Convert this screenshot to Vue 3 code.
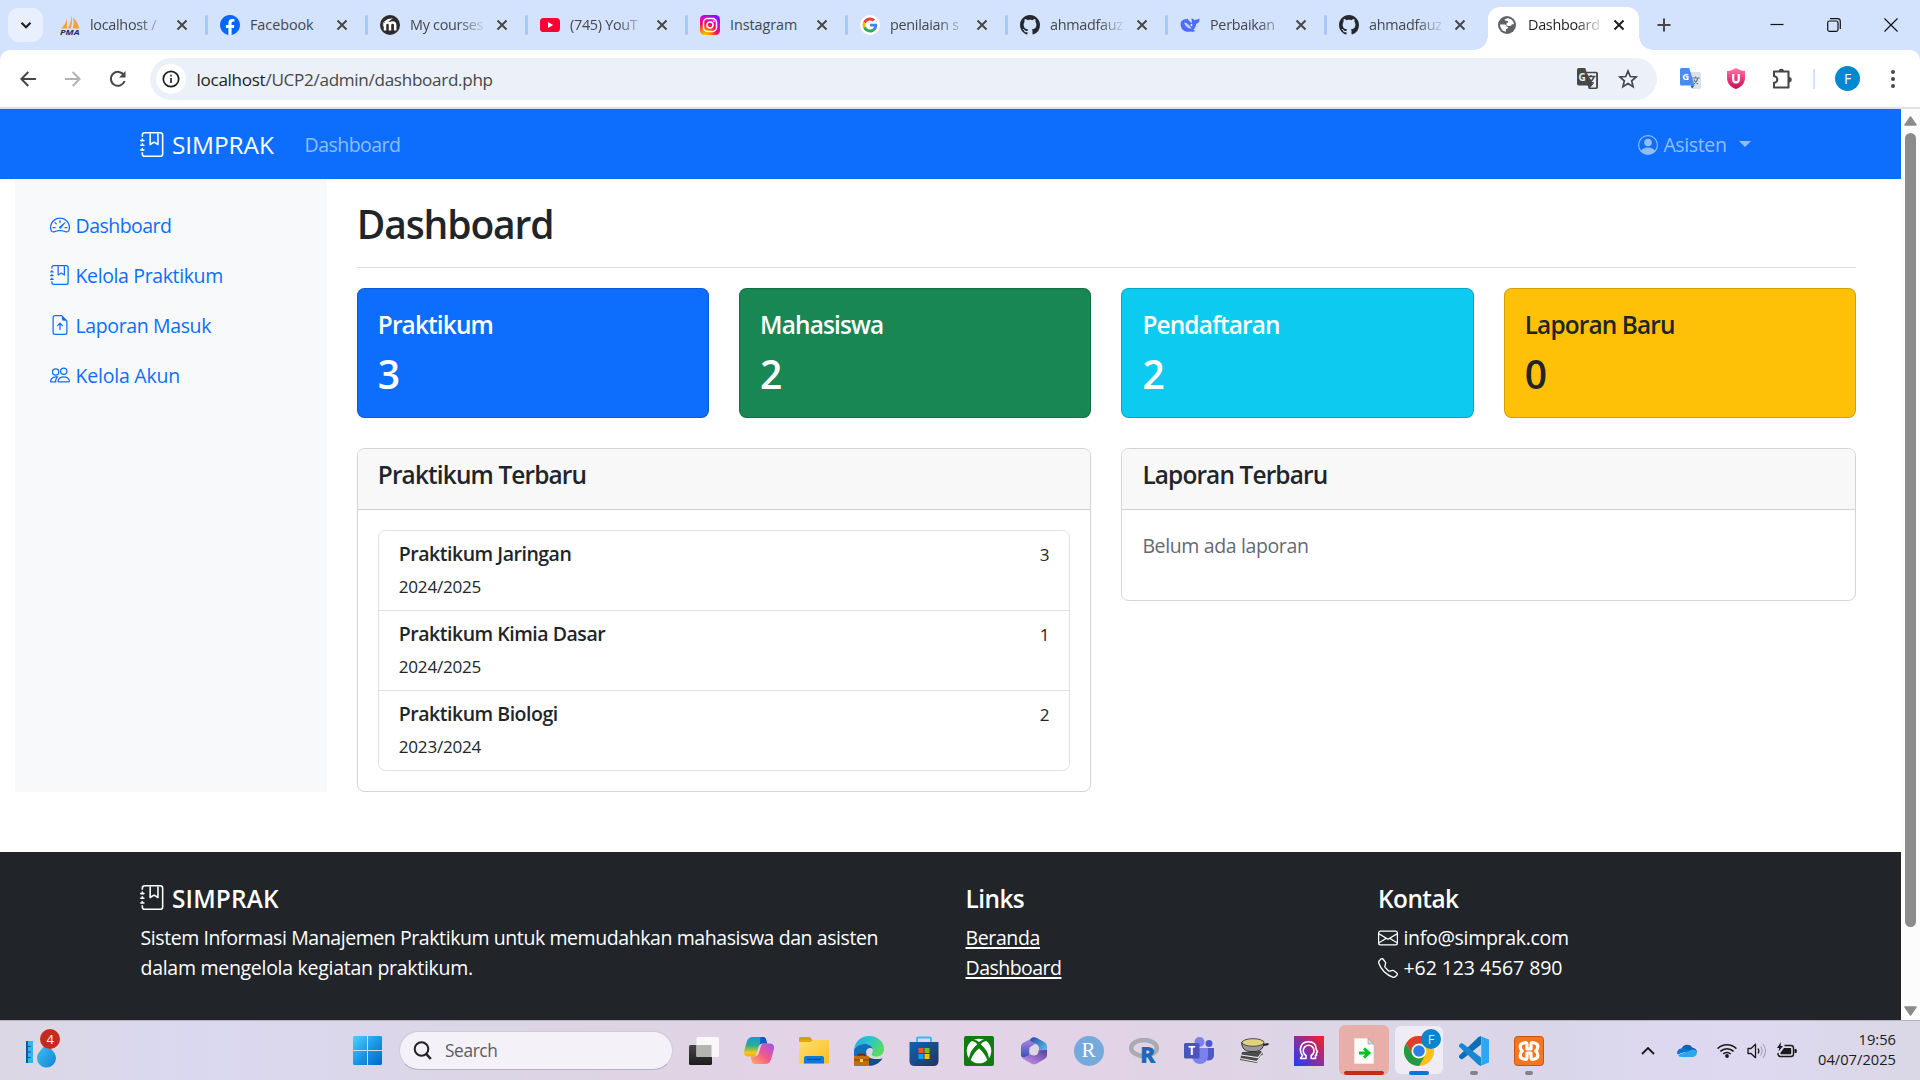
<script setup>
const bi = {
  journal: [
    'M6 8V1h1v6.117L8.743 6.07a.5.5 0 0 1 .514 0L11 7.117V1h1v7a.5.5 0 0 1-.757.429L9 7.083 6.757 8.43A.5.5 0 0 1 6 8z',
    'M3 0h10a2 2 0 0 1 2 2v12a2 2 0 0 1-2 2H3a2 2 0 0 1-2-2v-1h1v1a1 1 0 0 0 1 1h10a1 1 0 0 0 1-1V2a1 1 0 0 0-1-1H3a1 1 0 0 0-1 1v1H1V2a2 2 0 0 1 2-2z',
    'M1 5v-.5a.5.5 0 0 1 1 0V5h.5a.5.5 0 0 1 0 1h-2a.5.5 0 0 1 0-1H1zm0 3v-.5a.5.5 0 0 1 1 0V8h.5a.5.5 0 0 1 0 1h-2a.5.5 0 0 1 0-1H1zm0 3v-.5a.5.5 0 0 1 1 0v.5h.5a.5.5 0 0 1 0 1h-2a.5.5 0 0 1 0-1H1z'
  ],
  speedometer: [
    'M8 4a.5.5 0 0 1 .5.5V6a.5.5 0 0 1-1 0V4.5A.5.5 0 0 1 8 4zM3.732 5.732a.5.5 0 0 1 .707 0l.915.914a.5.5 0 1 1-.708.708l-.914-.915a.5.5 0 0 1 0-.707zM2 10a.5.5 0 0 1 .5-.5h1.586a.5.5 0 0 1 0 1H2.5A.5.5 0 0 1 2 10zm9.5 0a.5.5 0 0 1 .5-.5h1.5a.5.5 0 0 1 0 1H12a.5.5 0 0 1-.5-.5zm.754-4.246a.389.389 0 0 0-.527-.02L7.547 9.31a.91.91 0 1 0 1.302 1.258l3.434-4.297a.389.389 0 0 0-.029-.518z',
    'M0 10a8 8 0 1 1 15.547 2.661c-.442 1.253-1.845 1.602-2.932 1.25C11.309 13.488 9.475 13 8 13c-1.474 0-3.31.488-4.615.911-1.087.352-2.49.003-2.932-1.25A7.988 7.988 0 0 1 0 10zm8-7a7 7 0 0 0-6.603 9.329c.203.575.923.876 1.68.63C4.397 12.533 6.358 12 8 12s3.604.532 4.923.96c.757.245 1.477-.056 1.68-.631A7 7 0 0 0 8 3z'
  ],
  fileUp: [
    'M8.5 11.5a.5.5 0 0 1-1 0V7.707L6.354 8.854a.5.5 0 1 1-.708-.708l2-2a.5.5 0 0 1 .708 0l2 2a.5.5 0 0 1-.708.708L8.5 7.707V11.5z',
    'M14 14V4.5L9.5 0H4a2 2 0 0 0-2 2v12a2 2 0 0 0 2 2h8a2 2 0 0 0 2-2zM9.5 3A1.5 1.5 0 0 0 11 4.5h2V14a1 1 0 0 1-1 1H4a1 1 0 0 1-1-1V2a1 1 0 0 1 1-1h5.5v2z'
  ],
  people: [
    'M15 14s1 0 1-1-1-4-5-4-5 3-5 4 1 1 1 1h8Zm-7.978-1A.261.261 0 0 1 7 12.996c.001-.264.167-1.03.76-1.72C8.312 10.629 9.282 10 11 10c1.717 0 2.687.63 3.24 1.276.593.69.758 1.457.76 1.72l-.008.002A.274.274 0 0 1 15 13H7ZM11 7a2 2 0 1 0 0-4 2 2 0 0 0 0 4Zm3-2a3 3 0 1 1-6 0 3 3 0 0 1 6 0ZM6.936 9.28a5.88 5.88 0 0 0-1.23-.247A7.35 7.35 0 0 0 5 9c-4 0-5 3-5 4 0 .667.333 1 1 1h4.216A2.238 2.238 0 0 1 5 13c0-1.01.377-2.042 1.09-2.904.243-.294.526-.569.846-.816ZM4.92 10A5.493 5.493 0 0 0 4 13H1c0-.26.164-1.03.76-1.724.545-.636 1.492-1.256 3.16-1.275ZM1.5 5.5a3 3 0 1 1 6 0 3 3 0 0 1-6 0Zm3-2a2 2 0 1 0 0 4 2 2 0 0 0 0-4Z'
  ],
  person: [
    'M11 6a3 3 0 1 1-6 0 3 3 0 0 1 6 0z',
    'M0 8a8 8 0 1 1 16 0A8 8 0 0 1 0 8zm8-7a7 7 0 0 0-5.468 11.37C3.242 11.226 4.805 10 8 10s4.757 1.225 5.468 2.37A7 7 0 0 0 8 1z'
  ],
  envelope: [
    'M0 4a2 2 0 0 1 2-2h12a2 2 0 0 1 2 2v8a2 2 0 0 1-2 2H2a2 2 0 0 1-2-2V4Zm2-1a1 1 0 0 0-1 1v.217l7 4.2 7-4.2V4a1 1 0 0 0-1-1H2Zm13 2.383-4.708 2.825L15 11.105V5.383Zm-.034 6.876-5.64-3.471L8 9.583l-1.326-.795-5.64 3.47A1 1 0 0 0 2 13h12a1 1 0 0 0 .966-.741ZM1 11.105l4.708-2.897L1 5.383v5.722Z'
  ],
  telephone: [
    'M3.654 1.328a.678.678 0 0 0-1.015-.063L1.605 2.3c-.483.484-.661 1.169-.45 1.77a17.568 17.568 0 0 0 4.168 6.608 17.569 17.569 0 0 0 6.608 4.168c.601.211 1.286.033 1.77-.45l1.034-1.034a.678.678 0 0 0-.063-1.015l-2.307-1.794a.678.678 0 0 0-.58-.122l-2.19.547a1.745 1.745 0 0 1-1.657-.459L5.482 8.062a1.745 1.745 0 0 1-.46-1.657l.548-2.19a.678.678 0 0 0-.122-.58L3.654 1.328zM1.884.511a1.745 1.745 0 0 1 2.612.163L6.29 2.98c.329.423.445.974.315 1.494l-.547 2.19a.678.678 0 0 0 .178.643l2.457 2.457a.678.678 0 0 0 .644.178l2.189-.547a1.745 1.745 0 0 1 1.494.315l2.306 1.794c.829.645.905 1.87.163 2.611l-1.034 1.034c-.74.74-1.846 1.065-2.877.702a18.634 18.634 0 0 1-7.01-4.42 18.634 18.634 0 0 1-4.42-7.009c-.362-1.03-.037-2.137.703-2.877L1.885.511z'
  ]
}

const tabs = [
  { icon: 'pma', title: 'localhost /' },
  { icon: 'facebook', title: 'Facebook' },
  { icon: 'moodle', title: 'My courses' },
  { icon: 'youtube', title: '(745) YouT' },
  { icon: 'instagram', title: 'Instagram' },
  { icon: 'google', title: 'penilaian s' },
  { icon: 'github', title: 'ahmadfauz' },
  { icon: 'deepseek', title: 'Perbaikan', narrow: true },
  { icon: 'github', title: 'ahmadfauz', narrow: true },
  { icon: 'globe', title: 'Dashboard', active: true }
]

const menu = [
  { icon: 'speedometer', label: 'Dashboard', cls: 'tight' },
  { icon: 'journal', label: 'Kelola Praktikum' },
  { icon: 'fileUp', label: 'Laporan Masuk' },
  { icon: 'people', label: 'Kelola Akun', cls: 'loose' }
]

const stats = [
  { title: 'Praktikum', value: 3, tone: 'primary' },
  { title: 'Mahasiswa', value: 2, tone: 'success' },
  { title: 'Pendaftaran', value: 2, tone: 'info' },
  { title: 'Laporan Baru', value: 0, tone: 'warning' }
]

const courses = [
  { name: 'Praktikum Jaringan', year: '2024/2025', count: 3 },
  { name: 'Praktikum Kimia Dasar', year: '2024/2025', count: 1 },
  { name: 'Praktikum Biologi', year: '2023/2024', count: 2 }
]
</script>

<template>
  <div class="screen">
    <header class="browser">
      <div class="tabstrip">
        <button class="tab-search">
          <svg width="14" height="14" viewBox="0 0 14 14"><path d="M2.5 4.8 7 9.3l4.5-4.5" fill="none" stroke="#1f1f1f" stroke-width="2.2" /></svg>
        </button>
        <div v-for="(t, i) in tabs" :key="i" class="tab" :class="{ active: t.active, narrow: t.narrow }">
          <span class="fav">
            <svg v-if="t.icon === 'pma'" width="20" height="20" viewBox="0 0 20 20">
              <path d="M7 3.500V13.500H1C4 11 6 8 7 3.500zM11.500 0c.8 5 .6 9.500-.8 13.500H8C10 9.500 11.300 5 11.500 0zM13 2.500c3.500 3 5.500 7 6.200 11h-6.400C13.800 10 14 6 13 2.500z" fill="#f5a13d" />
              <text x="0" y="19.800" font-size="7.500" font-weight="700" font-style="italic" fill="#2b2c54" textLength="19.500" lengthAdjust="spacingAndGlyphs">PMA</text>
            </svg>
            <svg v-else-if="t.icon === 'facebook'" width="20" height="20" viewBox="0 0 16 16">
              <circle cx="8" cy="8" r="7.500" fill="#fff" />
              <path fill="#0866ff" d="M16 8.049c0-4.446-3.582-8.050-8-8.050C3.580 0 0 3.603 0 8.050c0 4.017 2.926 7.347 6.750 7.951v-5.625h-2.030V8.050H6.750V6.275c0-2.017 1.195-3.131 3.022-3.131.876 0 1.791.157 1.791.157v1.980h-1.009c-.993 0-1.303.621-1.303 1.258v1.510h2.218l-.354 2.326H9.250V16c3.824-.604 6.750-3.934 6.750-7.951z" />
            </svg>
            <svg v-else-if="t.icon === 'moodle'" width="20" height="20" viewBox="0 0 20 20">
              <circle cx="10" cy="10" r="10" fill="#2b2b2b" />
              <path d="M5 15.500V10q0-2.600 2.500-2.600T10 10v5.500M10 10q0-2.600 2.600-2.600T15.200 10v5.500" fill="none" stroke="#fff" stroke-width="2.500" />
              <path d="M2.800 7.500 8 4l5-.8-4.500 3.400z" fill="#fff" /><path d="M3.300 7.500v4" stroke="#fff" stroke-width=".8" />
            </svg>
            <svg v-else-if="t.icon === 'youtube'" width="20" height="20" viewBox="0 0 20 20">
              <rect y="3" width="20" height="14" rx="3.600" fill="#ff0033" /><path d="m8 7 5.200 3L8 13z" fill="#fff" />
            </svg>
            <svg v-else-if="t.icon === 'instagram'" width="20" height="20" viewBox="0 0 20 20">
              <defs>
                <radialGradient id="ig" cx=".25" cy="1.050" r="1.150">
                  <stop offset="0" stop-color="#ffd600" /><stop offset=".3" stop-color="#ff7a00" /><stop offset=".55" stop-color="#ff0069" /><stop offset=".78" stop-color="#e300c8" /><stop offset="1" stop-color="#7a14ff" />
                </radialGradient>
              </defs>
              <rect width="20" height="20" rx="4.500" fill="url(#ig)" />
              <rect x="3.500" y="3.500" width="13" height="13" rx="4" fill="none" stroke="#fff" stroke-width="1.500" />
              <circle cx="10" cy="10" r="3" fill="none" stroke="#fff" stroke-width="1.500" /><circle cx="13.800" cy="6.200" r=".9" fill="#fff" />
            </svg>
            <svg v-else-if="t.icon === 'google'" width="20" height="20" viewBox="0 0 20 20">
              <circle cx="10" cy="10" r="10" fill="#fff" />
              <g transform="translate(2.500 2.500) scale(.3125)">
                <path fill="#ea4335" d="M24 9.500c3.540 0 6.710 1.220 9.210 3.600l6.850-6.850C35.900 2.380 30.470 0 24 0 14.620 0 6.510 5.380 2.560 13.220l7.980 6.190C12.430 13.720 17.740 9.500 24 9.500z" />
                <path fill="#4285f4" d="M46.980 24.550c0-1.570-.15-3.090-.38-4.550H24v9.020h12.940c-.58 2.960-2.260 5.480-4.780 7.180l7.730 6c4.510-4.180 7.090-10.360 7.090-17.650z" />
                <path fill="#fbbc05" d="M10.530 28.590c-.48-1.450-.76-2.990-.76-4.590s.27-3.140.76-4.590l-7.980-6.190C.92 16.460 0 20.120 0 24c0 3.880.92 7.540 2.560 10.780l7.970-6.190z" />
                <path fill="#34a853" d="M24 48c6.480 0 11.930-2.130 15.890-5.810l-7.730-6c-2.150 1.450-4.920 2.300-8.160 2.300-6.260 0-11.570-4.220-13.470-9.910l-7.980 6.190C6.510 42.620 14.620 48 24 48z" />
              </g>
            </svg>
            <svg v-else-if="t.icon === 'github'" width="20" height="20" viewBox="0 0 16 16">
              <path fill="#24292f" d="M8 0C3.580 0 0 3.580 0 8c0 3.540 2.290 6.530 5.470 7.590.4.070.55-.17.55-.38 0-.19-.01-.82-.01-1.490-2.010.37-2.530-.49-2.690-.94-.09-.23-.48-.94-.82-1.130-.28-.15-.68-.52-.01-.53.63-.01 1.080.58 1.230.82.72 1.210 1.870.87 2.330.66.070-.52.28-.87.51-1.070-1.780-.2-3.640-.89-3.640-3.950 0-.87.31-1.590.82-2.150-.08-.2-.36-1.020.080-2.120 0 0 .67-.21 2.200.82.64-.18 1.320-.27 2-.27s1.360.090 2 .27c1.530-1.040 2.200-.82 2.200-.82.44 1.100.16 1.920.080 2.120.51.56.82 1.270.82 2.150 0 3.070-1.870 3.750-3.650 3.950.29.25.54.73.54 1.480 0 1.070-.01 1.930-.01 2.200 0 .21.15.46.55.38A8.010 8.010 0 0 0 16 8c0-4.420-3.580-8-8-8z" />
            </svg>
            <svg v-else-if="t.icon === 'deepseek'" width="20" height="20" viewBox="0 0 20 20">
              <path d="M.6 9.200C.6 5.800 3.500 4 6.500 4.300c1-.8 1.700-.6 1.700.3 0 .8 2 1.900 3.300 3.600.6-.8.4-2.600-.3-4.600C13 3.300 14 4.900 15 5.300c.8-.7 2.700-.4 4.600-1.700.2 3.500-1.200 5-3.300 5.200-.3 2.600-1.400 4.500-3 6l2.200 1.300c-1.600 1-3.300.9-4.600.3C5.600 18 .6 14.600.6 9.200z" fill="#4d6bfe" />
              <path d="M4.200 7.600c3.300.2 5.200 3 7.600 5.800-2.800.8-6.600-1.200-7.600-5.800z" fill="#d3e3fd" opacity=".85" /><circle cx="11.500" cy="10" r=".9" fill="#fff" />
            </svg>
            <svg v-else width="18" height="20" viewBox="0 0 18 18">
              <circle cx="9" cy="9" r="9" fill="#5f6368" />
              <path d="M2 8.500h4.500q2 0 2 2.200h1.800q0 2.300-2.300 2.300v2.800Q2.500 15 2 8.500zM10.200 2.300q5 1 5.800 6h-2.200q0 1.700-1.800 1.700h-2q-1.700 0-1.700-1.700t1.700-1.700V5q-3 0-3.500-1.200 1.500-1.600 3.700-1.500z" fill="#fff" />
            </svg>
          </span>
          <span class="tab-title">{{ t.title }}</span>
          <svg class="tab-x" width="12" height="12" viewBox="0 0 12 12"><path d="m1.500 1.500 9 9m0-9-9 9" :stroke="t.active ? '#1f1f1f' : '#474747'" stroke-width="2" /></svg>
        </div>
        <svg class="new-tab" width="14" height="14" viewBox="0 0 14 14"><path d="M7 .5v13M.5 7h13" stroke="#474747" stroke-width="2" /></svg>
        <div class="win-controls">
          <span><svg width="14" height="14" viewBox="0 0 14 14"><path d="M.5 6.500h13" stroke="#111" stroke-width="1.200" /></svg></span>
          <span><svg width="14" height="14" viewBox="0 0 14 14"><g fill="none" stroke="#111" stroke-width="1.200"><rect x=".7" y="3" width="10.300" height="10.300" rx="1.800" /><path d="M3 .7h7.500a2.800 2.800 0 0 1 2.800 2.800V11" /></g></svg></span>
          <span><svg width="14" height="14" viewBox="0 0 14 14"><path d="m.5.5 13 13m0-13-13 13" stroke="#111" stroke-width="1.200" /></svg></span>
        </div>
      </div>

      <div class="toolbar">
        <span class="tool"><svg width="16" height="16" viewBox="0 0 16 16"><path d="M16 8H1.600M8.300 1 1.400 8l6.900 7" fill="none" stroke="#474747" stroke-width="2" /></svg></span>
        <span class="tool"><svg width="16" height="16" viewBox="0 0 16 16"><path d="M0 8h14.400M7.700 1l6.900 7-6.900 7" fill="none" stroke="#b0b2b5" stroke-width="2" /></svg></span>
        <span class="tool"><svg width="18" height="18" viewBox="0 0 18 18"><path d="M15.600 11A7 7 0 1 1 15 5.300" fill="none" stroke="#474747" stroke-width="2" /><path d="M16.500 1v6.500H10z" fill="#474747" /></svg></span>
        <div class="omnibox">
          <span class="site-info"><svg width="18" height="18" viewBox="0 0 18 18"><circle cx="9" cy="9" r="7.700" fill="none" stroke="#1f1f1f" stroke-width="1.700" /><path d="M9 8v5M9 4.800v1.800" stroke="#1f1f1f" stroke-width="1.600" /></svg></span>
          <span class="url"><b>localhost</b>/UCP2/admin/dashboard.php</span>
          <svg class="omni-translate" width="21" height="21" viewBox="0 0 21 21">
            <path d="M1.700 0h6.600l1.100 3.800h9.900A1.700 1.700 0 0 1 21 5.500v13.800a1.700 1.700 0 0 1-1.700 1.700h-7.500l-1.200-3.600H1.700A1.700 1.700 0 0 1 0 15.700v-14A1.700 1.700 0 0 1 1.700 0z" fill="#474747" />
            <path d="M10 5.200h9.100v14.200h-6l3-3z" fill="#ebf0f9" />
            <path d="M10 8.500h8.500M14 7v1.500M17 8.500c-.7 3-2.600 4.800-5 6.300M12 10.200c.8 2.300 2.600 4 4.800 5.200" fill="none" stroke="#474747" stroke-width="1.300" />
            <text x="1.600" y="12.600" font-size="10" font-weight="700" fill="#ebf0f9">G</text>
          </svg>
          <svg width="20" height="20" viewBox="0 0 20 20"><path d="m10 2 2.300 5.500 5.900.5-4.500 3.900 1.400 5.800-5.100-3.100-5.100 3.100 1.400-5.800L1.800 8l5.900-.5z" fill="none" stroke="#474747" stroke-width="1.700" /></svg>
        </div>
        <span class="tool first">
          <svg width="21" height="21" viewBox="0 0 21 21">
            <path d="M8 4h11.500A1.500 1.500 0 0 1 21 5.500v14a1.500 1.500 0 0 1-1.500 1.500H12z" fill="#dfe1e5" />
            <path d="M12 10h7.500M15.500 8.500V10M18 10c-.6 2.500-2.300 4.500-4.300 6M13.800 11.500c.8 2 2.500 3.500 4.300 4.500" fill="none" stroke="#607d8b" stroke-width="1.200" />
            <path d="m10.500 17.500 4 0-2.500 3z" fill="#1a53c5" />
            <path d="M1.500 0H9.300l5.200 17.500h-13A1.500 1.500 0 0 1 0 16V1.500A1.500 1.500 0 0 1 1.500 0z" fill="#4a8af4" />
            <text x="2.200" y="12" font-size="9.500" font-weight="700" fill="#fff">G</text>
          </svg>
        </span>
        <span class="tool">
          <svg width="18" height="21" viewBox="0 0 18 21">
            <defs><linearGradient id="sh" x1="0" y1="0" x2="0" y2="1"><stop offset="0" stop-color="#ff7aa8" /><stop offset=".5" stop-color="#ea3d7c" /><stop offset="1" stop-color="#c2095a" /></linearGradient></defs>
            <path d="M9 0c2.500 1.600 5.500 2.700 9 3v7c0 5-3.500 9-9 11-5.500-2-9-6-9-11V3c3.500-.3 6.500-1.400 9-3z" fill="url(#sh)" />
            <path d="M6.200 6v5.500a2.800 2.800 0 0 0 5.600 0V6" fill="none" stroke="#fff" stroke-width="2.200" />
          </svg>
        </span>
        <span class="tool puzzle"><svg width="21" height="21" viewBox="0 0 21 21"><path d="M2 3.500h14.500v16H2v-4.700a3.300 3.300 0 0 0 0-6.600z" fill="none" stroke="#474747" stroke-width="2.100" stroke-linejoin="round" /><path d="M6.600 3.500a2.700 2.700 0 0 1 5.400 0zM17 9a2.700 2.700 0 0 1 0 5.400z" fill="#474747" /></svg></span>
        <span class="tool-sep"></span>
        <span class="tool"><span class="avatar">F</span></span>
        <span class="tool"><svg width="4" height="18" viewBox="0 0 4 18"><g fill="#474747"><circle cx="2" cy="2" r="2" /><circle cx="2" cy="9" r="2" /><circle cx="2" cy="16" r="2" /></g></svg></span>
      </div>
    </header>

    <div class="viewport">
      <div class="page">
        <nav class="navbar">
          <div class="container">
            <a class="brand"><svg class="bi" viewBox="0 0 16 16"><path v-for="d in bi.journal" :key="d" :d="d" /></svg>SIMPRAK</a>
            <a class="nav-link tight">Dashboard</a>
            <a class="nav-link user"><svg class="bi" viewBox="0 0 16 16"><path v-for="d in bi.person" :key="d" fill-rule="evenodd" :d="d" /></svg>Asisten<i class="caret"></i></a>
          </div>
        </nav>

        <div class="layout">
          <aside class="sidebar">
            <a v-for="m in menu" :key="m.label" :class="m.cls"><svg class="bi" viewBox="0 0 16 16"><path v-for="d in bi[m.icon]" :key="d" :d="d" /></svg>{{ m.label }}</a>
          </aside>
          <main class="main">
            <h1>Dashboard</h1>
            <div class="grid four">
              <section v-for="s in stats" :key="s.title" class="card stat" :class="s.tone">
                <h5>{{ s.title }}</h5>
                <h2>{{ s.value }}</h2>
              </section>
            </div>
            <div class="grid two">
              <section class="card">
                <div class="card-header"><h5>Praktikum Terbaru</h5></div>
                <div class="card-body">
                  <ul class="list">
                    <li v-for="c in courses" :key="c.name">
                      <div><h6>{{ c.name }}</h6><small>{{ c.count }}</small></div>
                      <small class="year">{{ c.year }}</small>
                    </li>
                  </ul>
                </div>
              </section>
              <section class="card">
                <div class="card-header"><h5>Laporan Terbaru</h5></div>
                <div class="card-body"><p class="muted">Belum ada laporan</p></div>
              </section>
            </div>
          </main>
        </div>

        <footer class="footer">
          <div class="container">
            <div class="col wide">
              <h5 class="caps"><svg class="bi" viewBox="0 0 16 16"><path v-for="d in bi.journal" :key="d" :d="d" /></svg>SIMPRAK</h5>
              <p><span class="l1">Sistem Informasi Manajemen Praktikum untuk memudahkan mahasiswa dan asisten</span><br><span class="l2">dalam mengelola kegiatan praktikum.</span></p>
            </div>
            <div class="col">
              <h5>Links</h5>
              <a>Beranda</a>
              <a class="tight">Dashboard</a>
            </div>
            <div class="col">
              <h5>Kontak</h5>
              <span class="contact"><svg class="bi" viewBox="0 0 16 16"><path :d="bi.envelope[0]" /></svg>info@simprak.com</span>
              <span class="contact phone"><svg class="bi" viewBox="0 0 16 16"><path :d="bi.telephone[0]" /></svg>+62 123 4567 890</span>
            </div>
          </div>
        </footer>
      </div>
      <div class="scrollbar">
        <svg width="13" height="10" viewBox="0 0 13 10"><path d="M6.500 1 12 9H1z" fill="#8b8b8b" stroke="#8b8b8b" stroke-width="1.500" stroke-linejoin="round" /></svg>
        <div class="thumb"></div>
        <svg class="down" width="13" height="10" viewBox="0 0 13 10"><path d="M6.500 9 12 1H1z" fill="#8b8b8b" stroke="#8b8b8b" stroke-width="1.500" stroke-linejoin="round" /></svg>
      </div>
    </div>

    <div class="taskbar">
      <div class="widget">
        <svg width="34" height="40" viewBox="0 0 34 40">
          <defs><linearGradient id="wd" x1="0" y1="0" x2="1" y2="1"><stop offset="0" stop-color="#3cc4f2" /><stop offset="1" stop-color="#1484d6" /></linearGradient></defs>
          <rect x="0" y="12" width="7" height="22" fill="#35b4ee" /><rect x="0" y="12" width="2" height="22" fill="#12569c" />
          <path d="M2 17.500h3M2 23h3M2 28.500h3" stroke="#12569c" stroke-width="1.200" />
          <path d="M20.500 14c4 6 9.500 9.500 9.500 15a9.500 9.500 0 0 1-19 0c0-5.500 5.500-9 9.500-15z" fill="url(#wd)" />
        </svg>
        <span class="badge">4</span>
      </div>
      <svg class="start" width="29" height="29" viewBox="0 0 29 29">
        <defs><linearGradient id="ws" x1="0" y1="0" x2="1" y2="1"><stop offset="0" stop-color="#4fd0fc" /><stop offset=".55" stop-color="#1593e3" /><stop offset="1" stop-color="#0068ce" /></linearGradient></defs>
        <path d="M1 0h13v14H0V1zM15 0h13l1 1v13H15zM0 15h14v14H1l-1-1zM15 15h14v13l-1 1H15z" fill="url(#ws)" />
      </svg>
      <div class="search">
        <svg width="20" height="20" viewBox="0 0 20 20"><circle cx="8.500" cy="8" r="6.800" fill="none" stroke="#222" stroke-width="2" /><path d="m13.300 13 4.500 5" stroke="#222" stroke-width="2.600" /></svg>
        <span>Search</span>
      </div>
      <div class="apps">
        <span class="app">
          <svg width="30" height="30" viewBox="0 0 30 30"><defs><linearGradient id="tv" x1="0" y1="0" x2="0" y2="1"><stop offset="0" stop-color="#454545" /><stop offset="1" stop-color="#1c1c1c" /></linearGradient></defs><rect y="9" width="23" height="20" rx="1.500" fill="url(#tv)" /><rect x="7.500" y="1" width="22.500" height="20" rx="1.500" fill="#f8f8f8" /><rect x="7.500" y="9" width="15" height="12" fill="#b4b4b2" /></svg>
        </span>
        <span class="app">
          <svg width="30" height="28" viewBox="0 0 30 28">
            <defs>
              <linearGradient id="c1" x1="0" y1="0" x2="0" y2="1"><stop offset="0" stop-color="#1497e8" /><stop offset=".45" stop-color="#2fb086" /><stop offset=".8" stop-color="#f3c820" /><stop offset="1" stop-color="#f6a821" /></linearGradient>
              <linearGradient id="c2" x1="1" y1="0" x2="0" y2="1"><stop offset="0" stop-color="#9c55f0" /><stop offset=".5" stop-color="#f0588c" /><stop offset="1" stop-color="#ffb257" /></linearGradient>
            </defs>
            <path d="M8.500 0H19c2 0 2.600 1.200 3.200 3l1 3.500H19c-3 0-4 2-4.600 4l-2 6.500C11.600 19 10.500 19.500 9 19.500H4c-3.500 0-4.700-2.500-3.700-6l2.500-9C3.700 1.500 5.500 0 8.500 0z" fill="url(#c1)" />
            <path d="M16.500 0H19c2 0 2.600 1.200 3.200 3l1 3.500H19c-1.500 0-2.500.5-3.200 1.300z" fill="#1c55c9" />
            <path d="M21.500 27H11c-2 0-2.800-1.200-3.300-3L6.800 19.500H10c3 0 4.200-1.500 4.800-3.500l2-6.500c.6-2 1.700-3 3.200-3h6c3.500 0 4.700 3 3.700 6.500l-2.500 9c-.8 3-2.700 5-5.700 5z" fill="url(#c2)" />
          </svg>
        </span>
        <span class="app">
          <svg width="30" height="27" viewBox="0 0 30 27"><defs><linearGradient id="fd" x1="0" y1="0" x2="1" y2="1"><stop offset="0" stop-color="#ffdf73" /><stop offset="1" stop-color="#fbbd1c" /></linearGradient></defs><path d="M1 0h10l3 4H0V1z" fill="#dd9b06" /><rect y="3" width="30" height="23.500" rx="1" fill="url(#fd)" /><path d="M0 5V3h14l-2.500 2z" fill="#e5a50f" /><path d="M5 26.500V21q0-2 2-2h16q2 0 2 2v5.500z" fill="#1279cf" /><path d="M8 22.500h14" stroke="#0a4f94" stroke-width="1.200" /></svg>
        </span>
        <span class="app">
          <svg width="30" height="30" viewBox="0 0 30 30">
            <defs><linearGradient id="eg" x1="0" y1="0" x2="1" y2=".5"><stop offset="0" stop-color="#1ba5dd" /><stop offset=".5" stop-color="#2cc3d0" /><stop offset="1" stop-color="#57dc5f" /></linearGradient></defs>
            <path d="M0 14C1 5.500 7 0 15 0c9 0 15 6 15 13 0 5-3.500 7.500-7.500 7.500-4.500 0-6-2-4-4C20 13.500 17 8 11 8 6 8 2 10 0 14z" fill="url(#eg)" />
            <path d="M0 14c2-4 6-6 11-6 4 0 7 2.500 8 5-1.500-1.500-4.500-1.500-6 .5-1.500 2-1 4.500 0 6.500H0z" fill="#0f6fc0" />
            <path d="M12 16c0 5 5.500 8.500 16.500 6.500-2.500 4-7 7.300-13.500 7.300z" fill="#134b8e" />
            <rect y="20" width="15" height="10" rx="1" fill="#c06d0f" /><path d="M4.500 20v-1.500h6V20" fill="none" stroke="#5b3008" stroke-width="1.300" /><path d="M0 24h15" stroke="#7e4507" /><rect x="6" y="23" width="3" height="3" fill="#ffd04a" />
          </svg>
        </span>
        <span class="app">
          <svg width="30" height="30" viewBox="0 0 30 30"><defs><linearGradient id="st" x1="0" y1="0" x2="1" y2="1"><stop offset="0" stop-color="#0b66b8" /><stop offset="1" stop-color="#273257" /></linearGradient></defs><path d="M8 7V2.500Q8 1.500 9 1.500h12q1 0 1 1V7" fill="none" stroke="#34b9f1" stroke-width="1.800" /><path d="M.5 6h29v19q0 5-5 5h-19q-5 0-5-5z" fill="url(#st)" /><path fill="#f35325" d="M9.500 12h5v5h-5z" /><path fill="#81bc06" d="M15.500 12h5v5h-5z" /><path fill="#05a6f0" d="M9.500 18h5v5h-5z" /><path fill="#ffba08" d="M15.500 18h5v5h-5z" /></svg>
        </span>
        <span class="app">
          <svg width="30" height="30" viewBox="0 0 30 30"><rect width="30" height="30" rx="2" fill="#107c10" /><circle cx="15" cy="15" r="12.300" fill="#fff" /><path d="M8 4.500c2.600-.5 5 .6 7 2.200 2-1.600 4.400-2.700 7-2.200-2.600.2-4.800 2-6.200 3.800 4.200 3.500 8.200 9.200 8.600 14l-.8.8C22 19 18.500 14.500 15 11.500 11.500 14.500 8 19 6.400 23.100l-.8-.8c.4-4.800 4.400-10.500 8.600-14C12.800 6.500 10.600 4.700 8 4.500z" fill="#107c10" stroke="#107c10" stroke-width="1.200" /></svg>
        </span>
        <span class="app">
          <svg width="26" height="28" viewBox="0 0 26 28">
            <defs><linearGradient id="m1" x1="0" y1="0" x2="0" y2="1"><stop offset="0" stop-color="#b98be8" /><stop offset="1" stop-color="#3450b8" /></linearGradient><linearGradient id="m2" x1="0" y1="0" x2="1" y2="1"><stop offset="0" stop-color="#2648a8" /><stop offset="1" stop-color="#5fd5f5" /></linearGradient><linearGradient id="m3" x1="1" y1="0" x2="0" y2="1"><stop offset="0" stop-color="#5a3c97" /><stop offset="1" stop-color="#cf9cf2" /></linearGradient></defs>
            <path d="M13 0 2 6Q0 7.200 0 9.500V18q0 2.500 3 2.500l5.500-1.700V10.500L17 5z" fill="url(#m1)" />
            <path d="M10 1.500Q13-.8 16 1l8 4.500Q26 7 26 9v9l-8-4.500V10q-1-3-9-6z" fill="url(#m2)" />
            <path d="M26 13v5.500q0 2-2 3.200l-8.500 5q-2.500 1.200-5 0L2 21.700q-1.600-1-2-2.700 2 2 5 .6l12-6.100z" fill="url(#m3)" />
            <circle cx="13" cy="14" r="4.600" fill="#e1d4e7" />
          </svg>
        </span>
        <span class="app"><span class="rstudio">R</span></span>
        <span class="app">
          <svg width="30" height="26" viewBox="0 0 30 26"><ellipse cx="15" cy="10" rx="12.800" ry="8" fill="none" stroke="#a9abb0" stroke-width="4.500" /><text x="11" y="25" font-size="23" font-weight="800" fill="#2266b8">R</text></svg>
        </span>
        <span class="app">
          <svg width="30" height="28" viewBox="0 0 30 28"><circle cx="25" cy="6.500" r="3.500" fill="#5059c9" /><path d="M20 11h10v7a5.500 5.500 0 0 1-8 5z" fill="#5059c9" /><circle cx="15.500" cy="5" r="5" fill="#7b83eb" /><path d="M8 11h16v8a8 8 0 0 1-16 0z" fill="#7b83eb" /><rect y="6" width="15.500" height="15.500" rx="1.500" fill="#4b53bc" /><text x="7.800" y="18" text-anchor="middle" font-size="12" font-weight="700" fill="#fff">T</text></svg>
        </span>
        <span class="app">
          <svg width="30" height="26" viewBox="0 0 30 26"><path d="m3 14 19-1 2 3-6 9-17-3z" fill="#4b4b4b" /><path d="m2 17 17 2.500 4-5M1.500 20.500 18 23.500l5-6" fill="none" stroke="#e8e8e8" stroke-width="1.200" /><path d="M2.500 4.500Q3 13 11 13.500h6q7-1 8-8z" fill="#999" stroke="#333" stroke-width="1" /><ellipse cx="14" cy="4.500" rx="11" ry="3.800" fill="#e3d27c" stroke="#4a4a4a" /><path d="m24.500 7 5-1" stroke="#222" stroke-width="2" /></svg>
        </span>
        <span class="app">
          <svg width="30" height="30" viewBox="0 0 30 30"><defs><linearGradient id="hd" x1="0" y1="1" x2="1" y2="0"><stop offset="0" stop-color="#1b3cff" /><stop offset=".5" stop-color="#8b2f9b" /><stop offset="1" stop-color="#ff1f1f" /></linearGradient></defs><rect width="30" height="30" fill="url(#hd)" /><path d="M6.500 22.500h5.500v-3q-2.800-1.600-2.800-4.800a5.400 5.400 0 0 1 10.800 0q0 3.200-2.800 4.800v3h4.300v-3.200h1v-2.500l1-.8-1.300-3Q22 5.800 14.500 5.800T6.300 13.500q0 3.700 2.200 6z" fill="none" stroke="#fff" stroke-width="1.600" stroke-linejoin="round" /></svg>
        </span>
        <span class="app alert">
          <svg width="20" height="26" viewBox="0 0 20 26"><path d="M0 0h14l6 6v20H0z" fill="#fbfbf8" stroke="#c9a9a5" stroke-width=".6" /><path d="M14 0v6h6z" fill="#d5d5d2" stroke="#888" stroke-width=".5" /><path d="M5 15h9M10 10.500l5 4.500-5 4.500" fill="none" stroke="#00c322" stroke-width="3" /></svg>
          <i class="bar"></i>
        </span>
        <span class="app current">
          <svg width="30" height="30" viewBox="0 0 30 30"><circle cx="15" cy="15" r="15" fill="#fbc116" /><path d="M2 7.500A15 15 0 0 1 28 7.500H15a7.500 7.500 0 0 0-6.500 11.200z" fill="#e33b2e" /><path d="M2 7.500 8.500 18.700A7.500 7.500 0 0 0 21.500 18.700L15 30A15 15 0 0 1 2 7.500z" fill="#229a48" /><circle cx="15" cy="15" r="7.300" fill="#fff" /><circle cx="15" cy="15" r="5.800" fill="#2f7de9" /></svg>
          <span class="profile">F</span>
          <i class="bar"></i>
        </span>
        <span class="app">
          <svg width="30" height="30" viewBox="0 0 30 30"><path d="M22 0v8.500L4.500 22.500 2.500 23.500 0 21.500v-1.800L19.500 1z" fill="#0b6fb5" /><path d="M22 30v-8.500L4.500 8 2.500 7 0 9v1.500L19.500 29z" fill="#1687d0" /><path d="M21 0 30 3.500v23L21 30q1.300-.8 1.300-2.500v-25Q22.300.8 21 0z" fill="#29a9f3" /></svg>
          <i class="bar idle"></i>
        </span>
        <span class="app">
          <svg width="30" height="30" viewBox="0 0 30 30"><rect x=".5" y=".5" width="29" height="29" rx="3" fill="#f37623" stroke="#c9540c" /><path d="M9.500 7q3.500-1.200 3.500 1.500V13h4V8.500q0-2.700 3.500-1.500 4 1 3.200 4.500-.3 2.200-2 3.500 1.700 1.300 2 3.500.8 3.500-3.200 4.500-3.500 1.200-3.500-1.500V17h-4v4.500q0 2.700-3.500 1.500-4-1-3.200-4.500.3-2.200 2-3.500-1.700-1.300-2-3.500Q5.500 8 9.500 7z" fill="none" stroke="#fff" stroke-width="3.200" stroke-linejoin="round" /></svg>
          <i class="bar idle"></i>
        </span>
      </div>
      <div class="tray">
        <svg class="chev" width="14" height="8" viewBox="0 0 14 8"><path d="m1 7 6-6 6 6" fill="none" stroke="#1a1a1a" stroke-width="1.800" /></svg>
        <svg class="cloud" width="20" height="13" viewBox="0 0 20 13"><path d="M4.500 5A6 6 0 0 1 15.500 3.800 5 5 0 0 1 20 8.500L10 10z" fill="#0f62b8" /><path d="M4.500 4.500A4 4 0 0 0 .8 10.600L12 6.500Q8 3.500 4.500 4.500z" fill="#0e74d3" /><path d="M1 11.300Q2 13 4.300 13h11.500a4.200 4.200 0 0 0 3.800-5.500Q18 4.500 14.500 5.800L6.500 9z" fill="#28a8ea" /></svg>
        <svg class="wifi" width="20" height="15" viewBox="0 0 20 15"><g fill="none" stroke="#1a1a1a" stroke-width="1.500"><path d="M.6 5.600a13.300 13.300 0 0 1 18.800 0M3.400 8.400a9.300 9.300 0 0 1 13.200 0M6.200 11a5.400 5.400 0 0 1 7.600 0" /></g><circle cx="10" cy="13" r="1.900" fill="#1a1a1a" /></svg>
        <svg class="vol" width="20" height="16" viewBox="0 0 20 16"><path d="M1 5.500h3L8.500 1.300v13.400L4 10.500H1z" fill="none" stroke="#1a1a1a" stroke-width="1.300" stroke-linejoin="round" /><path d="M11 5.500q1.700 2.500 0 5" fill="none" stroke="#1a1a1a" stroke-width="1.300" /><path d="M13.500 3.500q3.200 4.500 0 9M16 1q5 7 0 14" fill="none" stroke="#aaa6b8" stroke-width="1.200" /></svg>
        <svg class="battery" width="20" height="16" viewBox="0 0 20 16"><path d="M7.500 3.500H14a2.500 2.500 0 0 1 2.500 2.500v6a2.500 2.500 0 0 1-2.500 2.500H3.500A2.500 2.500 0 0 1 1 12.500V11" fill="none" stroke="#1a1a1a" stroke-width="1.400" /><path d="M7 6h6.500q.7 0 .7.700v4.800q0 .7-.7.700H4q-.7 0-.7-.7V11z" fill="#1a1a1a" /><path d="M17.500 7h1.300q1 0 1 1v2q0 1-1 1h-1.300z" fill="#1a1a1a" /><path d="M4 0 0 6h2.200L1.500 9.500 6 4H3.500z" fill="#1a1a1a" /></svg>
        <div class="clock"><span>19:56</span><span>04/07/2025</span></div>
      </div>
    </div>
  </div>
</template>

<style>
body { margin: 0; overflow: hidden; }
</style>

<style scoped>
* { box-sizing: border-box; }
.screen {
  width: 1920px; height: 1080px; overflow: hidden; display: flex; flex-direction: column;
  font-family: "Open Sans", "Noto Sans", sans-serif; font-size: 19.5px; line-height: 30px;
  letter-spacing: -.019em; color: #212529; background: #fff;
}
h1, h2, h5, h6, p, ul { margin: 0; padding: 0; font-weight: 400; }
svg { display: block; flex: none; }
svg text { letter-spacing: 0; }

/* browser chrome */
.browser { height: 109px; background: #d3e3fd; flex: none; }
.tabstrip { height: 50px; display: flex; align-items: center; padding-left: 8px; }
.tab-search { width: 35px; height: 34px; border: 0; padding: 0; border-radius: 11px; background: #e9f0fd; display: flex; align-items: center; justify-content: center; margin-right: 3.500px; }
.tab { position: relative; width: 160px; height: 50px; display: flex; align-items: center; padding-left: 13.500px; flex: none; }
.tab.narrow { width: 159px; }
.tab:not(.active)::after { content: ""; position: absolute; right: -1px; top: 15px; width: 3px; height: 20px; border-radius: 2px; background: #a8c7fa; }
.tab:nth-child(10)::after { display: none; }
.tab > * { position: relative; }
.fav { width: 20px; display: flex; }
.tab-title { width: 76px; margin-left: 10px; font-size: 14.400px; letter-spacing: -.02em; line-height: 20px; white-space: nowrap; color: #45474a; -webkit-mask-image: linear-gradient(90deg, #000 48px, rgba(0, 0, 0, .15) 72px, transparent 76px); }
.tab:nth-child(3) .tab-title, .tab:nth-child(6) .tab-title { -webkit-mask-image: none; letter-spacing: -.004em; }
.tab-x { margin-left: 10px; }
.narrow .tab-x { margin-left: 9px; }
.tab.active { width: 158.500px; }
.active .tab-x { margin-left: 9px; }
.tab.active .tab-title { color: #1f1f1f; }
.tab.active::before {
  content: ""; position: absolute; left: 3.500px; top: 7px; width: 151px; height: 43px; background: #fff; border-radius: 12px 12px 0 0;
}
.tab.active::after {
  content: ""; position: absolute; left: -10.500px; bottom: 0; width: 179px; height: 14px;
  background: radial-gradient(circle at 0 0, transparent 13.500px, #fff 14px) left / 14px 14px no-repeat, radial-gradient(circle at 100% 0, transparent 13.500px, #fff 14px) right / 14px 14px no-repeat;
}
.new-tab { margin-left: 14px; }
.win-controls { margin-left: auto; margin-right: 1px; display: flex; }
.win-controls span { width: 57px; display: flex; justify-content: center; }
.toolbar { height: 59px; background: #fff; border-radius: 10px 10px 0 0; border-bottom: 2px solid #dfe1e3; display: flex; align-items: center; padding-left: 5px; }
.tool { width: 45px; display: flex; justify-content: center; }
.tool.first { margin-left: 11.500px; }
.puzzle { padding-left: 3px; }
.tool-sep { width: 2px; height: 20px; background: #d3e3fd; margin: 0 10.500px 0 9.500px; }
.avatar { width: 25px; height: 25px; border-radius: 50%; background: #0288d1; color: #fff; font-size: 14px; line-height: 25px; text-align: center; }
.omnibox { width: 1506.500px; height: 42px; margin-left: 10px; border-radius: 21px; background: #ebf0f9; display: flex; align-items: center; padding: 0 19px 0 6px; }
.site-info { width: 30px; height: 30px; border-radius: 50%; background: #fff; display: flex; align-items: center; justify-content: center; }
.url { margin-left: 10.500px; font-size: 17.100px; letter-spacing: -.0175em; color: #474747; padding-top: 2px; }
.url b { font-weight: 400; color: #1f1f1f; }
.omni-translate { margin-left: auto; margin-right: 20px; }

/* page */
.viewport { height: 911px; display: flex; overflow: hidden; flex: none; }
.page { width: 1901px; }
.container { width: 1650px; margin: 0 auto; padding: 0 15px; display: flex; }
.bi { width: 1em; height: 1em; fill: currentColor; }
.navbar { height: 70px; background: #0d6efd; display: flex; align-items: center; }
.navbar .container { align-items: center; }
.brand { display: flex; align-items: center; gap: 7px; font-size: 24.400px; letter-spacing: -.002em; color: #fff; width: 164px; padding-top: 1px; }
.brand .bi, h5 .bi { width: 25px; height: 25px; margin-left: -.5px; margin-top: -1px; }
.nav-link { display: flex; align-items: center; color: rgba(255, 255, 255, .55); padding-top: 2px; }
.user { margin-left: auto; margin-right: 10px; gap: 5px; }
.user .bi { width: 20px; height: 20px; }
.caret { border: 6px solid transparent; border-top-color: currentColor; border-bottom: 0; margin-left: 7px; margin-top: -2px; }
.tight { letter-spacing: -.0265em; }
.loose { letter-spacing: -.011em; }
.layout { display: flex; padding: 0 15px; }
.sidebar { width: 311.800px; height: 613px; background: #f8f9fa; padding-top: 20px; flex: none; }
.sidebar a { display: flex; align-items: center; gap: 5.500px; height: 50px; padding: 3px 0 0 35px; color: #0d6efd; }
.sidebar .bi { width: 20px; height: 20px; margin-top: -1px; }
.main { flex: 1; padding: 20px 30px 0; }
h1 { font-size: 39px; line-height: 50px; font-weight: 600; letter-spacing: -.029em; border-bottom: 1px solid #dcdfe2; margin-bottom: 20px; height: 69px; }
.grid { display: grid; gap: 30px; align-items: start; }
.four { grid-template-columns: repeat(4, 1fr); margin-bottom: 30px; }
.two { grid-template-columns: 1fr 1fr; }
h5 { font-size: 24.400px; line-height: 32px; height: 30px; font-weight: 600; letter-spacing: -.035em; margin-bottom: 10px; }
.card { border: 1px solid #d3d4d5; border-radius: 7.500px; background: #fff; overflow: hidden; }
.stat { height: 130px; padding: 19px; color: #fff; border-color: rgba(0, 0, 0, .176); background-clip: border-box; }
.stat { padding: 20px; }
.stat h2 { font-size: 39px; line-height: 50px; font-weight: 600; }
.primary { background-color: #0d6efd; }
.success { background-color: #198754; }
.info { background-color: #0dcaf0; }
.warning { background-color: #ffc107; color: #212529; }
.card-header { padding: 10px 20px; height: 61px; background: #f8f8f8; border-bottom: 1px solid #d0d1d2; }
.card-body { padding: 20px; }
.list { list-style: none; border: 1px solid #dee2e6; border-radius: 7.500px; }
.list li { height: 80px; padding: 10px 20px; border-bottom: 1px solid #dee2e6; }
.list li:last-child { border-bottom: 0; height: 79px; }
.list div { display: flex; justify-content: space-between; height: 29px; }
h6 { font-size: 19.500px; line-height: 26px; font-weight: 600; letter-spacing: -.0245em; }
small { display: block; font-size: 17.100px; line-height: 33px; letter-spacing: -.014em; }
.list div small { line-height: 28px; }
.muted { color: #646a6f; margin-bottom: 20px; padding-top: 1px; height: 30px; letter-spacing: -.019em; }
.footer { margin-top: 60px; background: #212529; color: #fff; height: 200px; padding-top: 30px; }
.col { width: 412.500px; flex: none; display: flex; flex-direction: column; align-items: flex-start; padding-top: 1px; }
.col h5 { line-height: 31px; }
.col.wide { width: 825px; }
.footer h5 { letter-spacing: -.022em; }
.footer h5.caps { display: flex; align-items: center; gap: 7px; letter-spacing: .006em; }
.footer p { white-space: nowrap; }
.l1 { letter-spacing: -.0215em; }
.l2 { letter-spacing: -.0145em; }
.footer a { text-decoration: underline; text-underline-offset: 2px; text-decoration-thickness: 1.500px; }
.contact { display: flex; align-items: center; gap: 5.500px; letter-spacing: -.016em; }
.contact .bi { width: 20px; height: 20px; }
.phone { letter-spacing: -.004em; }
.scrollbar { width: 19px; background: #fcfcfc; display: flex; flex-direction: column; align-items: center; padding-top: 7px; }
.thumb { width: 11px; height: 794px; border-radius: 6px; background: #8b8b8b; margin-top: 7px; }
.down { margin-top: auto; margin-bottom: 4px; }

/* taskbar */
.taskbar {
  height: 60px; flex: none; display: flex; align-items: center; border-top: 1px solid #b9b5bf;
  background: linear-gradient(90deg, #dbd7e4 0, #dad8f0 190px, #dbd6e8 420px, #ddd4e3 600px, #e2d3e6 760px, #e2d3e6 1120px, #dcd6e6 1330px, #dad6ea 1560px, #ded9f1 1740px, #dad7e6 1920px);
}
.widget { position: relative; width: 34px; height: 40px; margin: -4px 293px 0 26px; }
.badge { position: absolute; left: 14px; top: 0; width: 20px; height: 20px; border-radius: 50%; background: #c42b1c; color: #fff; font-size: 13px; line-height: 20px; text-align: center; }
.start { margin-right: 17px; }
.search { width: 274px; height: 39px; border-radius: 20px; background: #f4f2f8; border: 1px solid #d0c9da; border-bottom-color: #b5afc0; display: flex; align-items: center; padding-left: 13px; }
.search span { font-size: 17.300px; margin-left: 12px; color: #5b5b60; }
.apps { display: flex; height: 59px; margin-left: 3px; }
.app { position: relative; width: 55px; height: 59px; display: flex; align-items: center; justify-content: center; z-index: 0; }
.rstudio { width: 30px; height: 30px; border-radius: 50%; background: #75aadb; color: #fff; font: 21px/29px "Liberation Serif", serif; text-align: center; letter-spacing: 0; }
.alert::before, .current::before { content: ""; position: absolute; z-index: -1; left: 2.500px; top: 4px; width: 50px; height: 50px; border-radius: 6px; background: #e8aeaa; }
.current::before { left: 3.500px; top: 5px; width: 48px; height: 48px; background: #efecf5; }
.profile { position: absolute; right: 5px; top: 8px; width: 20px; height: 20px; border-radius: 50%; background: #0a84cb; color: #cfe6f5; font-size: 13px; line-height: 20px; text-align: center; }
.bar { position: absolute; bottom: 5.500px; left: 17.500px; width: 20px; height: 4px; border-radius: 2px; background: #0078d4; }
.alert .bar { left: 7.500px; width: 40px; background: #c42b1c; }
.bar.idle { left: 23.500px; width: 8px; background: #858089; }
.tray { flex: 1; display: flex; align-items: center; margin-left: 84.500px; }
.chev { margin-right: 22.500px; }
.cloud { margin-right: 20px; }
.wifi, .vol { margin-right: 10px; }
.battery { margin-top: -2px; }
.clock { margin-left: auto; margin-right: 24px; margin-top: -4px; display: flex; flex-direction: column; align-items: flex-end; font-size: 14.700px; line-height: 20px; letter-spacing: 0; color: #1a1a1a; }
</style>
